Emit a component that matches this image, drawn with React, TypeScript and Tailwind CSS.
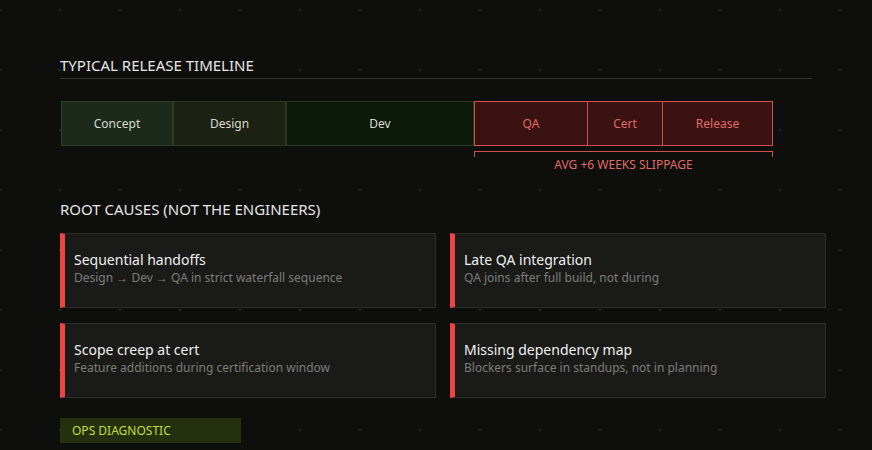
import React from 'react';

const phases = [
  { name: 'Concept', w: 'w-[112px]', cls: 'bg-[#1b2a1b] border-[#2f3f22] text-[#d8dccf]' },
  { name: 'Design', w: 'w-[113px]', cls: 'bg-[#1d2113] border-[#2f3a1c] text-[#d8dccf]' },
  { name: 'Dev', w: 'w-[188px]', cls: 'bg-[#0c1a0c] border-[#263a1a] text-[#d8dccf]' },
];
const late = [
  { name: 'QA', w: 'w-[112px]' },
  { name: 'Cert', w: 'w-[75px]' },
  { name: 'Release', w: 'w-[110px]' },
];

const causes = [
  { title: 'Sequential handoffs', sub: 'Design → Dev → QA in strict waterfall sequence' },
  { title: 'Late QA integration', sub: 'QA joins after full build, not during' },
  { title: 'Scope creep at cert', sub: 'Feature additions during certification window' },
  { title: 'Missing dependency map', sub: 'Blockers surface in standups, not in planning' },
];

export default function App() {
  return (
    <div
      className="w-[872px] h-[450px] overflow-hidden bg-[#0e0e0d] bg-[radial-gradient(circle,#262624_1px,transparent_1.5px)] bg-[size:60px_60px] bg-[position:-30px_-20px] px-[60px] pt-[55px] font-['Liberation_Sans']"
    >
      <h2 className="text-[15px] text-[#e6e6e6] leading-[20px] pb-[3px] border-b border-[#333331] w-[752px]">
        TYPICAL RELEASE TIMELINE
      </h2>

      <div className="mt-[22px] ml-[1px] flex">
        {phases.map(p => (
          <div key={p.name} className={`${p.w} h-[45px] border flex items-center justify-center text-[12px] ${p.cls}`}>
            {p.name}
          </div>
        ))}
        <div className="flex flex-col">
          <div className="flex border border-[#d0504e] bg-[#3a1212]">
            {late.map((p, i) => (
              <div
                key={p.name}
                className={`${p.w} h-[43px] flex items-center justify-center text-[12px] text-[#e06a66] ${i > 0 ? 'border-l border-[#d0504e]' : ''}`}
              >
                {p.name}
              </div>
            ))}
          </div>
          <div className="mt-[5px] h-[6px] border-x border-t border-[#d0504e]" />
          <div className="text-center text-[12px] text-[#e06a66] leading-[14px] mt-[1px]">AVG +6 WEEKS SLIPPAGE</div>
        </div>
      </div>

      <h2 className="mt-[27px] text-[15px] text-[#e6e6e6] leading-[20px]">ROOT CAUSES (NOT THE ENGINEERS)</h2>

      <div className="mt-[14px] grid grid-cols-[376px_376px] gap-x-[14px] gap-y-[15px]">
        {causes.map(c => (
          <div key={c.title} className="h-[75px] bg-[#1a1a18] border border-[#2c2c2a] border-l-[5px] border-l-[#ef4444] pl-[9px] pt-[17px]">
            <div className="text-[14px] text-[#f0f0f0] leading-[18px]">{c.title}</div>
            <div className="text-[12px] text-[#7d7d7a] leading-[18px]">{c.sub}</div>
          </div>
        ))}
      </div>

      <div className="mt-[20px] w-[181px] h-[25px] bg-[#25300f] flex items-center pl-[12px] text-[12px] text-[#c2dd3c]">
        OPS DIAGNOSTIC
      </div>
    </div>
  );
}
